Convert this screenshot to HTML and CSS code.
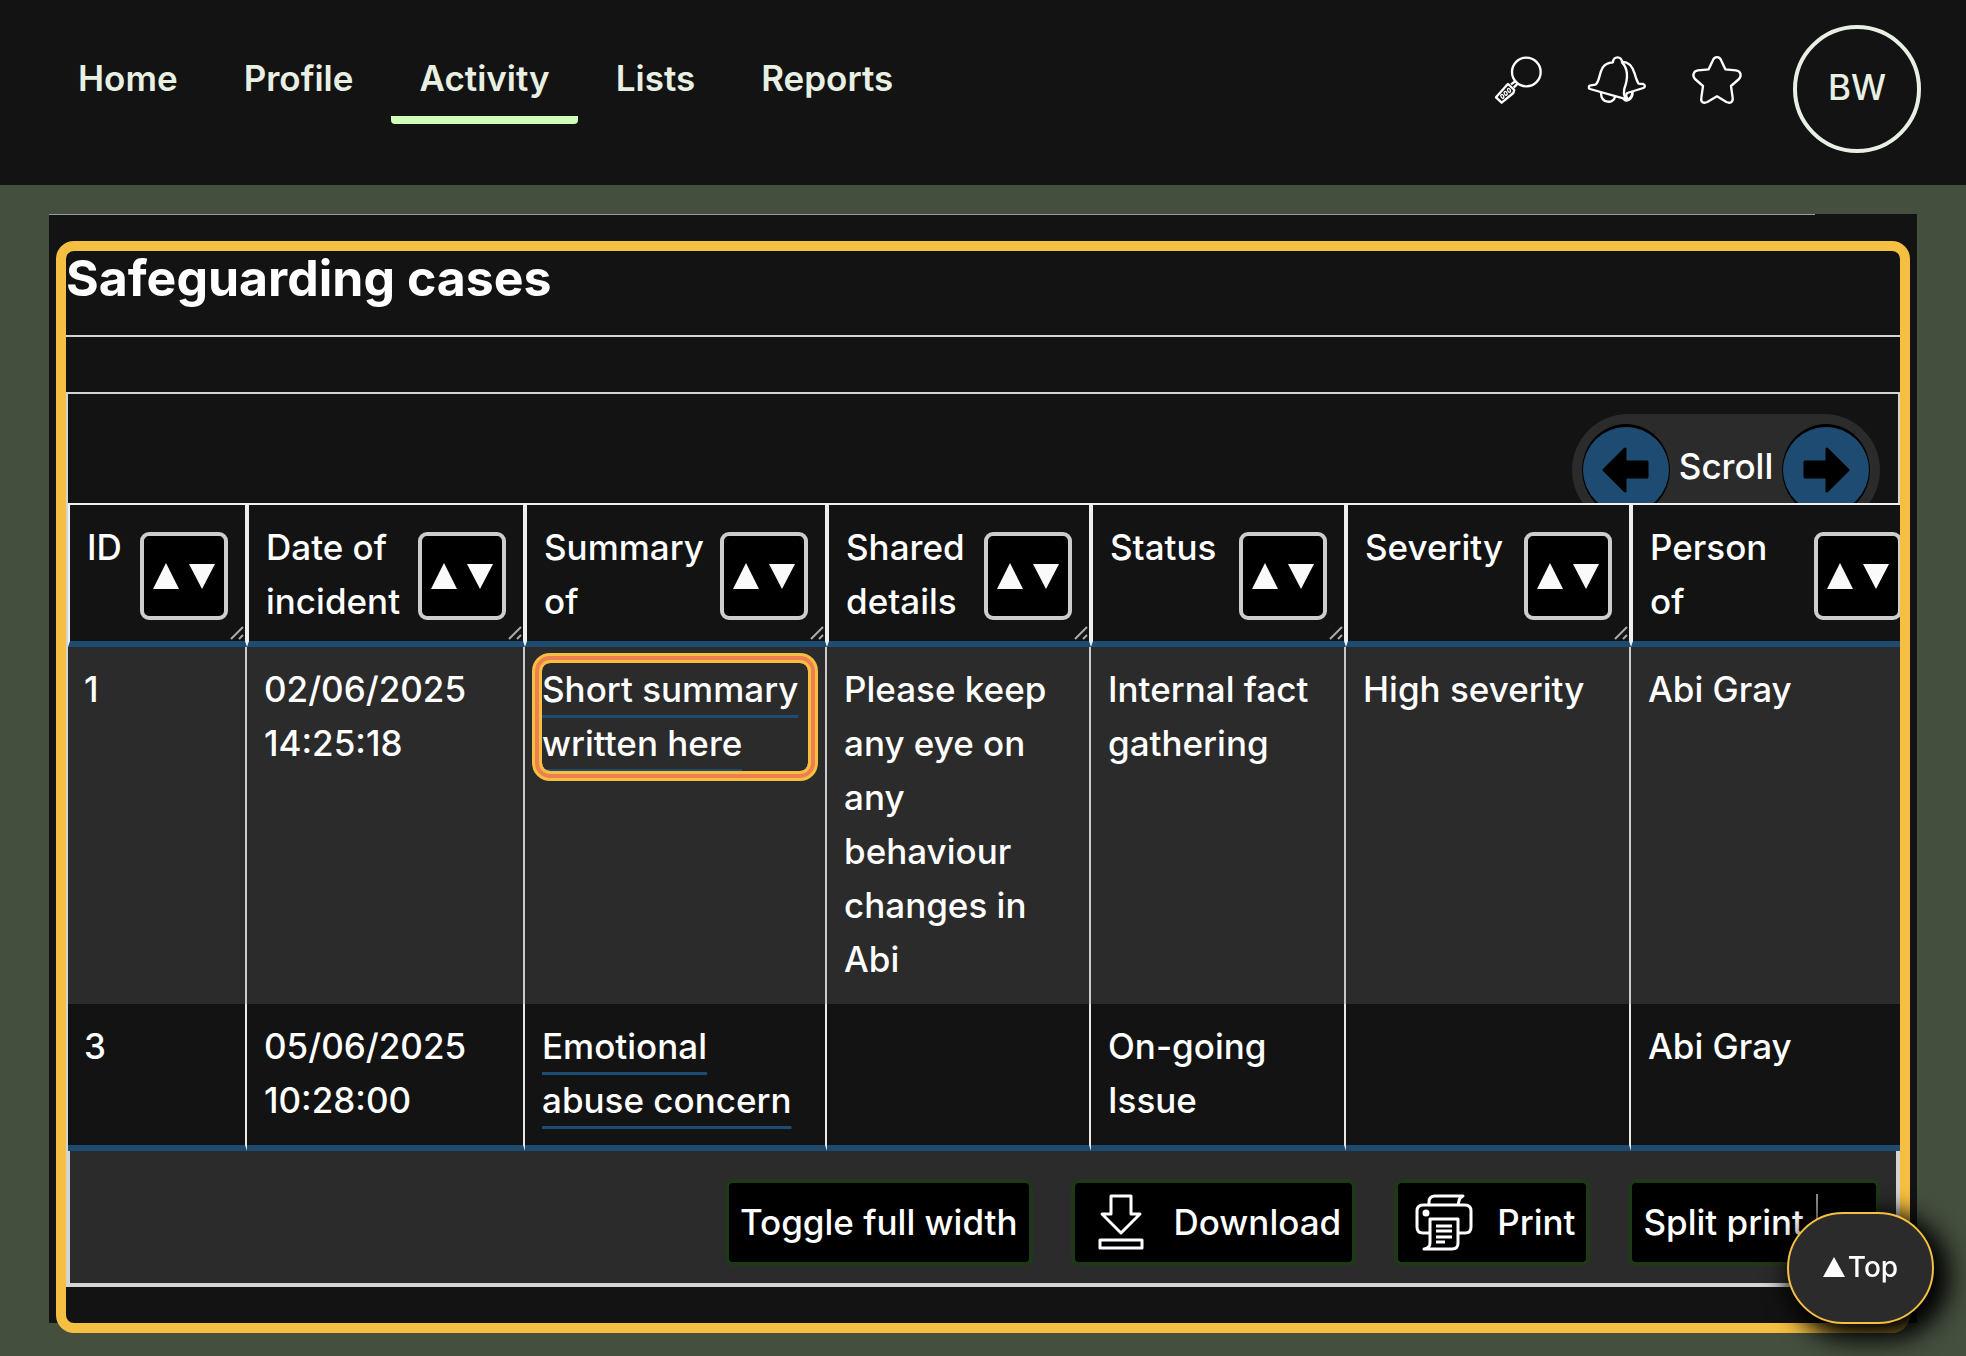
FILE: index.html
```html
<!DOCTYPE html>
<html lang="en">
<head>
<meta charset="utf-8">
<meta name="viewport" content="width=device-width, initial-scale=1">
<title>Safeguarding cases</title>
<link rel="stylesheet" href="styles.css">
</head>
<body>
<svg class="sprite" aria-hidden="true">
  <symbol id="sort" viewBox="0 0 62 26"><path d="M0 26 13 0l13 26zM36 1h26L49 26z"/></symbol>
  <symbol id="grip" viewBox="0 0 14 14"><path d="M1 13 13 1M9 13l4-4"/></symbol>
</svg>

<header class="site-header">
  <nav class="main-nav" aria-label="Main">
    <a class="nav-link" href="#home">Home</a>
    <a class="nav-link" href="#profile">Profile</a>
    <a class="nav-link is-current" href="#activity" aria-current="page">Activity</a>
    <a class="nav-link" href="#lists">Lists</a>
    <a class="nav-link" href="#reports">Reports</a>
  </nav>
  <div class="tools">
    <button class="icon-button" type="button" aria-label="Search">
      <svg class="icon" width="48" height="48" viewBox="0 0 144 144">
        <circle cx="97" cy="48" r="43"/>
        <path d="M51 85 65 75M59 95l12-12"/>
        <path d="m42 84 19 18-3 9-35 29L6 124l31-35z"/>
        <g class="fine">
          <ellipse cx="25" cy="121" rx="4" ry="6" transform="rotate(-30 25 121)"/>
          <ellipse cx="35" cy="112" rx="4" ry="6" transform="rotate(-30 35 112)"/>
          <ellipse cx="45" cy="103" rx="4" ry="6" transform="rotate(-30 45 103)"/>
        </g>
      </svg>
    </button>
    <button class="icon-button" type="button" aria-label="Notifications">
      <svg class="icon" width="58" height="48" viewBox="0 0 174 144">
        <path d="M75 19C75-1 102-1 102 19 122 40 120 68 109 98c-3 15 0 27 10 33L6 99c-6-3-4-11 2-11l14-2C35 78 32 55 44 35c7-12 18-15 31-16z"/>
        <path d="M100 18c22-2 33 12 40 35 4 14 7 24 12 30l14 1c6 2 6 10 0 12l-48 15c-5 3-4 12 1 18"/>
        <path d="M39 110c0 34 38 34 42 12M106 128c8 12 28 4 28-20M119 130c8-2 13-10 14-21"/>
      </svg>
    </button>
    <button class="icon-button" type="button" aria-label="Favourites">
      <svg class="icon" width="50" height="48" viewBox="0 0 150 144">
        <path d="M62 14c5-14 21-14 26 0l12 26 32 3c14 2 18 16 9 26l-24 21 5 35c2 14-8 18-19 13l-28-17-29 17c-11 5-21 1-18-13l5-35L9 69C0 59 4 45 18 43l32-3z"/>
      </svg>
    </button>
    <button class="avatar" type="button" aria-label="Account">BW</button>
  </div>
</header>

<main class="page">
  <hr class="page-rule">
  <section class="cases" tabindex="-1" aria-labelledby="cases-title">
    <h2 class="cases-title" id="cases-title">Safeguarding cases</h2>

    <div class="scroll-bar">
      <div class="scroll-pill">
        <button class="round-button" type="button" aria-label="Scroll left">
          <svg width="48" height="46" viewBox="0 0 48 46"><path d="M2 23 23 2v13h22v15H23v14z"/></svg>
        </button>
        <span class="scroll-label">Scroll</span>
        <button class="round-button" type="button" aria-label="Scroll right">
          <svg width="48" height="46" viewBox="0 0 48 46"><path d="M46 23 25 2v13H3v15h22v14z"/></svg>
        </button>
      </div>
    </div>

    <div class="table-wrap">
      <table class="cases-table">
        <colgroup>
          <col class="col-id"><col class="col-date"><col class="col-summary"><col class="col-shared"><col class="col-status"><col class="col-severity"><col class="col-person">
        </colgroup>
        <thead>
          <tr>
            <th scope="col"><div class="head"><span>ID</span><button class="sort" type="button" aria-label="Sort by ID"><svg width="62" height="26"><use href="#sort"/></svg></button><svg class="grip"><use href="#grip"/></svg></div></th>
            <th scope="col"><div class="head"><span>Date of incident</span><button class="sort" type="button" aria-label="Sort by date"><svg width="62" height="26"><use href="#sort"/></svg></button><svg class="grip"><use href="#grip"/></svg></div></th>
            <th scope="col"><div class="head"><span>Summary of</span><button class="sort" type="button" aria-label="Sort by summary"><svg width="62" height="26"><use href="#sort"/></svg></button><svg class="grip"><use href="#grip"/></svg></div></th>
            <th scope="col"><div class="head"><span>Shared details</span><button class="sort" type="button" aria-label="Sort by shared details"><svg width="62" height="26"><use href="#sort"/></svg></button><svg class="grip"><use href="#grip"/></svg></div></th>
            <th scope="col"><div class="head"><span>Status</span><button class="sort" type="button" aria-label="Sort by status"><svg width="62" height="26"><use href="#sort"/></svg></button><svg class="grip"><use href="#grip"/></svg></div></th>
            <th scope="col"><div class="head"><span>Severity</span><button class="sort" type="button" aria-label="Sort by severity"><svg width="62" height="26"><use href="#sort"/></svg></button><svg class="grip"><use href="#grip"/></svg></div></th>
            <th scope="col"><div class="head"><span>Person<br>of</span><button class="sort" type="button" aria-label="Sort by person"><svg width="62" height="26"><use href="#sort"/></svg></button></div></th>
          </tr>
        </thead>
        <tbody>
          <tr>
            <td>1</td>
            <td>02/06/2025 14:25:18</td>
            <td><a class="case-link is-focused" href="#case-1">Short summary written here</a></td>
            <td>Please keep any eye on any behaviour changes in Abi</td>
            <td>Internal fact gathering</td>
            <td>High severity</td>
            <td>Abi Gray</td>
          </tr>
          <tr>
            <td>3</td>
            <td>05/06/2025 10:28:00</td>
            <td><a class="case-link" href="#case-3">Emotional abuse concern</a></td>
            <td></td>
            <td>On-going Issue</td>
            <td></td>
            <td>Abi Gray</td>
          </tr>
        </tbody>
      </table>
    </div>

    <div class="toolbar">
      <button class="action" type="button">Toggle full width</button>
      <button class="action has-icon" type="button">
        <svg class="icon" width="56" height="56" viewBox="0 0 56 56"><path d="M18 2h20v18h9L28 39 9 20h9zM7 46h42v8H7z"/></svg>
        Download
      </button>
      <button class="action has-icon" type="button">
        <svg class="icon" width="56" height="56" viewBox="0 0 56 56">
          <path d="M13 39H7q-6 0-6-6V17q0-6 6-6h42q6 0 6 6v16q0 6-6 6h-6"/>
          <path d="M13 11V8q0-6 6-6h28q-4 2-4 5l-1 4"/>
          <path d="M14 25h28v24q0 6-6 6H8q6-1 6-6z"/>
          <path d="M20 32h16M20 37h16M20 43h16M20 48h9"/>
          <circle class="dot" cx="10" cy="19" r="2"/>
        </svg>
        Print
      </button>
      <button class="action split" type="button">
        <span>Split print</span>
        <span class="split-part"></span>
      </button>
    </div>
  </section>
</main>

<a class="to-top" href="#top"><svg width="22" height="20" viewBox="0 0 22 20"><path d="M0 20 11 0l11 20z"/></svg>Top</a>
</body>
</html>
```
FILE: styles.css
```css
:root {
  --page: #444f3e;
  --panel: #131313;
  --raised: #2b2b2b;
  --line: #d4d4d4;
  --blue: #1d4b71;
  --focus: #f5bf41;
}

* {
  box-sizing: border-box;
}

body {
  margin: 0;
  background: var(--page);
  color: #fff;
  font: 450 35px/54px Inter, "Liberation Sans", sans-serif;
}

button {
  margin: 0;
  padding: 0;
  border: 0;
  background: none;
  color: inherit;
  font: inherit;
}

.sprite {
  display: none;
}

.icon {
  display: block;
  fill: none;
  stroke: #fff;
  stroke-width: 7;
  stroke-linejoin: round;
  overflow: visible;
}

.fine {
  stroke-width: 4;
}

/* Header */

.site-header {
  display: flex;
  justify-content: space-between;
  align-items: flex-start;
  padding: 25px 45px 32px 50px;
  background: var(--panel);
  color: #e8f0e3;
}

.main-nav {
  display: flex;
  gap: 10px;
  padding-top: 26px;
}

.nav-link {
  padding: 0 28px 11px;
  border-bottom: 8px solid transparent;
  border-radius: 0 0 4px 4px;
  color: inherit;
  font-weight: 600;
  text-decoration: none;
}

.nav-link.is-current {
  border-bottom-color: #cfffb8;
}

.tools {
  display: flex;
  gap: 46px;
}

.icon-button {
  height: 110px;
}

.avatar {
  width: 128px;
  height: 128px;
  margin-left: 5px;
  padding-bottom: 4px;
  border: 4px solid #e8f0e3;
  border-radius: 50%;
}

/* Panel */

.page {
  margin: 29px 49px 32px;
  padding: 0 17px;
  background: var(--panel);
}

.page-rule {
  height: 1px;
  margin: 0 85px 36px -17px;
  border: 0;
  background: #9a9a9a;
}

.cases {
  padding-bottom: 36px;
  border-radius: 8px;
  outline: 10px solid var(--focus);
}

.cases-title {
  margin: 0 0 55px;
  padding-bottom: 30px;
  border-bottom: 2px solid var(--line);
  font-size: 50px;
  font-weight: 700;
  line-height: 54px;
}

.scroll-bar {
  display: flex;
  justify-content: flex-end;
  height: 111px;
  padding: 20px 18px 0;
  border: 2px solid var(--line);
  border-bottom: 0;
  overflow: hidden;
}

.scroll-pill {
  display: flex;
  flex: none;
  justify-content: space-between;
  align-items: center;
  width: 308px;
  height: 112px;
  padding: 0 10px;
  border-radius: 56px;
  background: var(--raised);
}

.scroll-label {
  padding-bottom: 8px;
}

.round-button {
  display: grid;
  place-items: center;
  width: 88px;
  height: 92px;
  border: 1px solid #000;
  border-width: 3px 1px;
  border-radius: 50%;
  background: var(--blue);
}

.round-button svg {
  stroke: #000;
  stroke-width: 3;
  stroke-linejoin: round;
}

/* Table */

.table-wrap {
  border-left: 2px solid var(--line);
  overflow-x: auto;
  scrollbar-width: none;
}

.cases-table {
  width: 1853px;
  min-width: 100%;
  border-spacing: 0;
  table-layout: fixed;
}

.col-id { width: 179px; }
.col-date { width: 278px; }
.col-summary { width: 302px; }
.col-shared { width: 264px; }
.col-status { width: 255px; }
.col-severity { width: 285px; }

th {
  padding: 0;
  border: 2px solid #efefef;
  border-bottom: 6px solid var(--blue);
  font-weight: inherit;
  text-align: left;
  vertical-align: top;
}

.head {
  position: relative;
  display: flex;
  justify-content: space-between;
  align-items: flex-start;
  gap: 8px;
  height: 136px;
  padding: 15px 17px 0;
  overflow: hidden;
}

.sort {
  display: grid;
  flex: none;
  place-items: center;
  width: 88px;
  height: 88px;
  margin-top: 12px;
  border: 4px solid #cdcdcd;
  border-radius: 9px;
  background: #000;
  fill: #fafafa;
}

.grip {
  position: absolute;
  right: 1px;
  bottom: 1px;
  width: 14px;
  height: 14px;
  stroke: #aaa;
  stroke-width: 2;
}

td {
  padding: 15px 17px 18px;
  border-right: 2px solid #e8e8e8;
  vertical-align: top;
}

td:first-child {
  padding-left: 16px;
}

tbody tr:nth-child(odd) {
  background: var(--raised);
}

tbody tr:nth-child(odd) td {
  border-right-color: #c9c9c9;
}

tbody tr:last-child td {
  border-bottom: 6px solid var(--blue);
}

.case-link {
  position: relative;
  display: block;
  color: inherit;
  text-decoration: underline 3px var(--blue);
  text-decoration-skip-ink: none;
  text-underline-offset: 13px;
}

.is-focused::after {
  content: "";
  position: absolute;
  inset: 1px 0 -1px;
  border-radius: 8px;
  box-shadow: 0 0 0 3px var(--focus), 0 0 0 7px #f07f50, 0 0 0 10px var(--focus);
}

/* Toolbar */

.toolbar {
  display: flex;
  justify-content: flex-end;
  gap: 38px;
  padding: 28px 16px 17px;
  border: 4px solid var(--line);
  border-top: 0;
  background: var(--raised);
}

.action {
  display: flex;
  align-items: center;
  height: 87px;
  padding: 0 11px 2px;
  border: 4px solid #1f3819;
  border-radius: 8px;
  background: #000;
  white-space: nowrap;
}

.has-icon {
  gap: 25px;
  padding-left: 18px;
}

.action .icon {
  stroke-width: 3;
}

.icon .dot {
  fill: #fff;
}

.split {
  gap: 12px;
}

.split-part {
  width: 49px;
  height: 56px;
  border-left: 2px solid #888;
}

.to-top {
  position: fixed;
  right: 32px;
  bottom: 32px;
  display: flex;
  justify-content: center;
  align-items: center;
  gap: 3px;
  width: 147px;
  height: 112px;
  padding-bottom: 2px;
  border: 2px solid var(--focus);
  border-radius: 56px;
  background: var(--raised);
  box-shadow: 8px 8px 24px 8px #000;
  color: #fff;
  fill: #fff;
  font-size: 28px;
  text-decoration: none;
}
```
